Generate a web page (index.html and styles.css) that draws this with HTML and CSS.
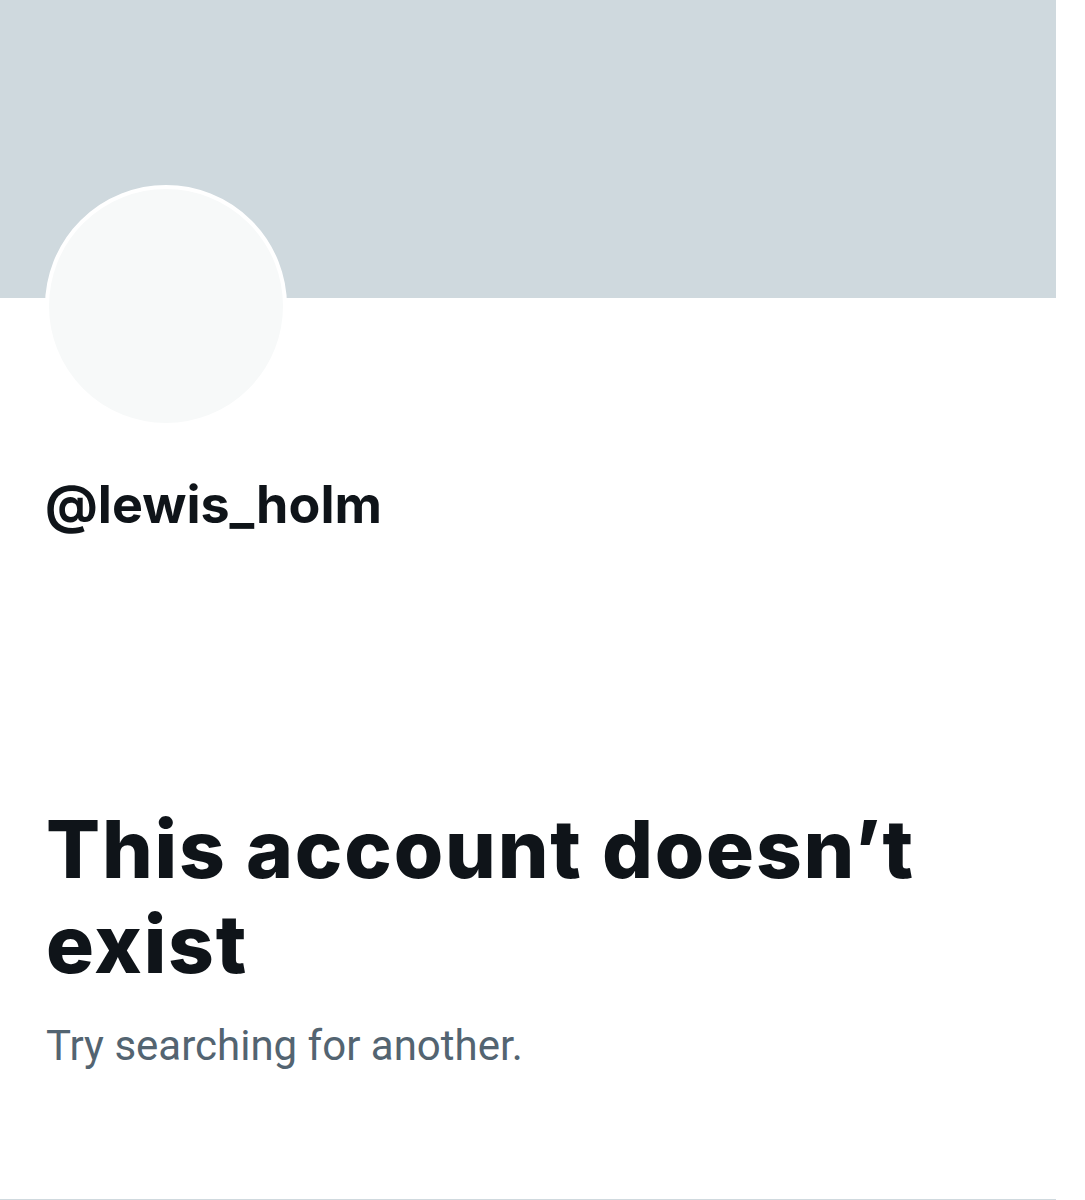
FILE: index.html
```html
<!DOCTYPE html>
<html lang="en">
<head>
    <meta charset="UTF-8">
    <meta name="viewport" content="width=device-width, initial-scale=1.0">
    <title>Profile</title>
    <link rel="stylesheet" href="styles.css">
</head>
<body>
    <div class="profile">
        <div class="banner"></div>
        <div class="avatar"></div>
        <div class="handle">@lewis_holm</div>

        <div class="empty-state">
            <h1>This account doesn’t exist</h1>
            <p>Try searching for another.</p>
        </div>
    </div>
</body>
</html>
```

FILE: styles.css
```css
body {
    font-family: Inter, 'Noto Sans', sans-serif;
    background-color: #ffffff;
    color: #0f1419;
    margin: 0;
    padding: 0;
}
.profile {
    width: 1056px;
    height: 1199px;
    border-bottom: 1px solid #cfd9de;
}
.banner {
    background-color: #cfd9de;
    height: 298px;
}
.avatar {
    width: 234px;
    height: 234px;
    margin: -113px 0 0 45px;
    border: 4px solid #ffffff;
    border-radius: 50%;
    background-color: #f7f9f9;
}
.handle {
    font-size: 52px;
    font-weight: 700;
    margin: 48px 0 0 45px;
    line-height: 60px;
}
.empty-state {
    margin: 266px 0 0 46px;
}
h1 {
    font-size: 80px;
    font-weight: 800;
    line-height: 95px;
    letter-spacing: 1.8px;
    margin: 0;
    width: 960px;
}
p {
    font-family: Roboto, 'Noto Sans', sans-serif;
    font-size: 42px;
    color: #536471;
    margin: 30px 0 0 0;
    line-height: 50px;
}
```
